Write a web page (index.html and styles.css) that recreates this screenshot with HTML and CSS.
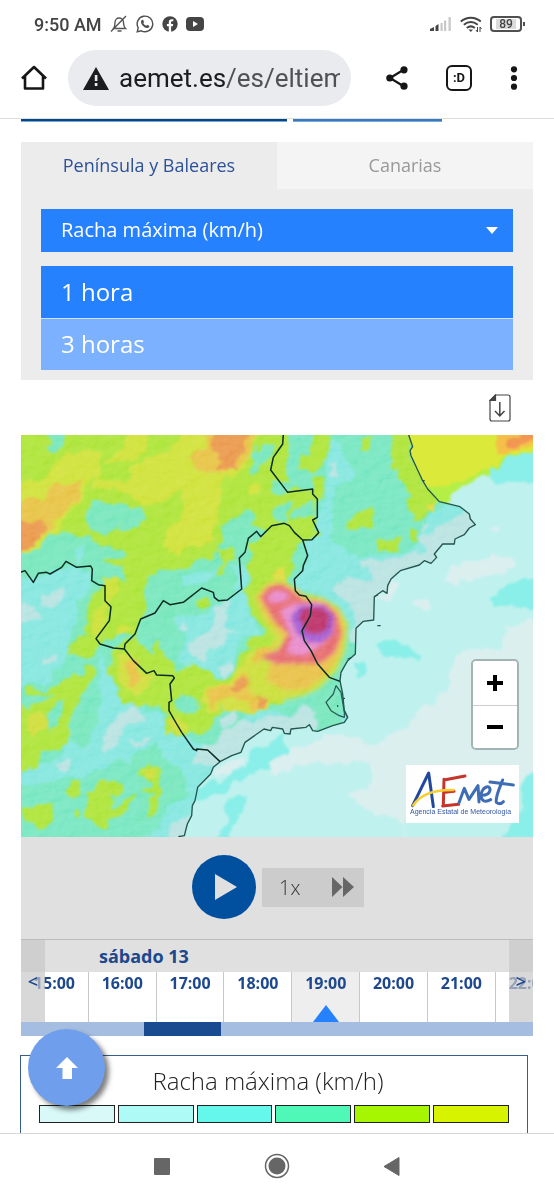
FILE: index.html
```html
<!DOCTYPE html>
<html lang="es">
<head>
<meta charset="utf-8">
<meta name="viewport" content="width=device-width, initial-scale=1">
<title>Racha máxima - AEMET</title>
<link rel="stylesheet" href="styles.css">
</head>
<body>
<header class="status">
  <span class="clock">9:50 AM</span>
  <svg class="st-icon" width="18" height="18" viewBox="0 0 18 18" fill="none" stroke="#555" stroke-width="1.4"><path d="M3.5 13.5c1.300-1.500 1.500-3 1.500-6C5 4.500 7 3 9 3s4.500 1.500 4.500 4.500c0 3 .3 4.500 2 6zM1 16.500 16 1M7.500 16h4"/></svg>
  <svg class="st-icon" width="18" height="18" viewBox="0 0 18 18"><path d="M1.200 16.800l1-4A7.800 7.800 0 1 1 5.300 15.800z" fill="none" stroke="#505050" stroke-width="1.400"/><path d="M5.700 5l1.400-.3 1 2.200-.8 1c.7 1.400 1.600 2.200 3 2.900l1-1 2.100 1.100c0 1.600-1.400 2.300-2.600 2.100C7.700 12.400 5.300 9.700 5 7.300c-.1-1 .2-1.700.7-2.300z" fill="#505050"/></svg>
  <svg class="st-icon" width="16" height="16" viewBox="0 0 16 16"><circle cx="8" cy="8" r="7.700" fill="#454545"/><path d="M6.800 16v-5.800H4.900V8h1.900V6.200c0-2 1.100-3 2.900-3l1.600.1v2h-1c-.9 0-1.200.5-1.200 1.200V8h2.100l-.4 2.200H9.100V16z" fill="#fff"/></svg>
  <svg class="st-icon" width="18" height="14" viewBox="0 0 18 14"><rect width="18" height="14" rx="4" fill="#454545"/><path d="M7 4l5 3-5 3z" fill="#fff"/></svg>
  <span class="grow"></span>
  <svg width="22" height="16" viewBox="0 0 22 16"><path d="M0 15v-2l4-2v4zM5.500 15v-5L8.500 8v7z" fill="#444"/><path d="M10.500 15V7h2.200v8zM14 15V4.500h2.200V15zM18.500 15V1h2.300v14z" fill="#c8c8c8"/></svg>
  <svg width="22" height="17" viewBox="0 0 22 17" fill="none" stroke="#444" stroke-width="2"><path d="M.8 5.500c6-5 14-5 20 0M3.800 8.800c4.500-3.500 9.500-3.500 14 0M6.800 12c2.500-2 5.500-2 8 0"/><path d="M8.500 13.500l2.300 2.500 2.200-2.500z" fill="#444" stroke="none"/><path d="M17.500 11v5m0 0l-1.500-2M20 16v-5m0 0l1.500 2" stroke-width="1"/></svg>
  <span class="battery"><span>89</span></span>
</header>
<div class="toolbar">
  <button class="bare" aria-label="Inicio"><svg width="28" height="28" viewBox="0 0 28 28" fill="none" stroke="#161616" stroke-width="2.600" stroke-linejoin="round"><path d="M5 12v12.500h18V12M2 14.500 14 3l12 11.500"/></svg></button>
  <div class="address">
    <svg class="warn" width="26" height="24" viewBox="0 0 26 24"><path d="M13 1 26 24H0z" fill="#1b1c1f"/><path d="M11.800 9h2.600v6h-2.600zM11.800 17h2.600v3h-2.600z" fill="#eaebef"/></svg>
    <span class="url">aemet.es<span class="path">/es/eltiem</span></span>
  </div>
  <div class="actions">
    <button class="bare" aria-label="Compartir"><svg width="22" height="24" viewBox="0 0 22 24"><path d="M18 3.500 4 12l14 8.500" fill="none" stroke="#161616" stroke-width="2.200"/><g fill="#161616"><circle cx="18" cy="3.800" r="3.600"/><circle cx="3.800" cy="12" r="3.600"/><circle cx="18" cy="20.200" r="3.600"/></g></svg></button>
    <button class="bare tabs-count" aria-label="Pestañas">:D</button>
    <button class="bare" aria-label="Menú"><svg width="8" height="24" viewBox="0 0 8 24" fill="#161616"><circle cx="4" cy="3.300" r="3.100"/><circle cx="4" cy="12" r="3.100"/><circle cx="4" cy="20.700" r="3.100"/></svg></button>
  </div>
</div>
<main class="content">
  <div class="rules"><span class="rule dark"></span><span class="rule"></span></div>
  <section class="filters">
    <nav class="regions">
      <a href="#peninsula" class="region active">Península y Baleares</a>
      <a href="#canarias" class="region">Canarias</a>
    </nav>
    <div class="fields">
      <div class="picker">
        <select aria-label="Variable"><option>Racha máxima (km/h)</option></select>
        <svg class="caret" width="12" height="7" viewBox="0 0 12 7"><path d="M0 0h12L6 7z" fill="#fff"/></svg>
      </div>
      <div class="periods">
        <button class="period on">1 hora</button>
        <button class="period">3 horas</button>
      </div>
    </div>
  </section>
  <div class="download">
    <button class="bare" aria-label="Descargar"><svg width="22" height="28" viewBox="0 0 22 28" fill="none" stroke="#444" stroke-width="1.200"><path d="M6.500 1H19q2 0 2 2v22q0 2-2 2H3q-2 0-2-2V6.500z"/><path d="M1 6.500 6.500 1v5.500z" fill="#444"/><path d="M10.800 8v14M6 17l4.800 5 4.700-5" stroke-width="1.500"/></svg></button>
  </div>
  <section class="map">
    <svg class="map-art" viewBox="3 3 1536 1206" preserveAspectRatio="xMidYMid slice" role="img" aria-label="Mapa de racha máxima">
      <defs>
        <filter id="soft" x="-10%" y="-10%" width="120%" height="120%"><feGaussianBlur stdDeviation="2"/></filter>
        <filter id="hot" x="-10%" y="-10%" width="120%" height="120%"><feGaussianBlur stdDeviation="7"/></filter>
        <filter id="cells" x="-5%" y="-5%" width="110%" height="110%" color-interpolation-filters="sRGB"><feTurbulence type="fractalNoise" baseFrequency="0.022" numOctaves="3" seed="4" result="n"/><feDisplacementMap in="SourceGraphic" in2="n" scale="42" xChannelSelector="R" yChannelSelector="G"/><feGaussianBlur stdDeviation="3"/></filter>
        <filter id="relief" x="0" y="0" width="100%" height="100%"><feTurbulence type="fractalNoise" baseFrequency="0.025 0.035" numOctaves="4" seed="9"/><feDiffuseLighting surfaceScale="9" lighting-color="#fff"><feDistantLight azimuth="225" elevation="50"/></feDiffuseLighting></filter>
      </defs>
      <g filter="url(#cells)">
      <rect x="-60" y="-60" width="1660" height="1340" fill="#71e5bd"/>
      <g>
        <path fill="#a9e334" d="M-60-60H800V600H-60z"/>
        <path fill="#cde035" d="M-40 145 60 142 100 88 150 55 240 55 245 100 225 130 190 190 140 240 110 300 40 350-40 360zM225 130 270 140 325 150 330 105 400 60 450 50 490-40H735L690 80 640 122 605 150 595 230 575 330 510 340 470 370 430 340 440 290 480 250 500 165 420 205 360 210 325 180 230 160zM250 82 300 50 325-20 385-20 370 60 340 82zM685 140H715V185H690z"/>
        <path fill="#e6c040" d="M-40 215 70 195 75 168 190 135 185 180 130 240 70 300 40 335-40 355zM545-40 560 40 510 75 525 100 570 122 620 120 665 90 700 50 720-40z"/>
        <path fill="#e99346" d="M-40 268 70 255 75 280 45 330-40 350zM585-40 575 40 600 90V108H650L655 70 685 25 695-40z"/>
        <path fill="#71e5b8" d="M85-30H140L130 40 108 55 85 50zM205 205 285 200 300 215 370 220 382 260 350 275 285 280 250 305 205 275zM-40 365 60 340 80 300 120 305 160 300 220 310 230 340 310 348 322 365 255 380 300 400 320 440 280 430 240 455 210 500 200 560 180 610H-40zM380 440 410 410 500 405 510 385 560 375 590 350 610 310 605 280 650 240 670 225 700 230 690 280 745 290 690 330 700 360 680 400 690 440 680 500 710 560 750 610H350L370 540zM690 80 700 60 740 35 768 40 750 80 715 95 715 112 690 115zM755 145H800V185H765zM755 245 770 225 800 205V260H770z"/>
        <path fill="#a9e334" d="M590 342 635 345 640 370 620 390 600 435 585 430 608 385zM520 500 570 490 575 515 545 520z"/>
        <path fill="#7ee5dd" d="M-40 440 100 412 150 400 210 410 215 455 180 500 150 610H-40zM485 430 540 410 600 415 560 450 490 458zM640 390 682 390 678 470 690 540 720 600H470L460 555 540 540 620 500 650 480zM150 350 190 340 200 370 170 385z"/>
        <path fill="#b3e1df" d="M70 490 130 458 140 472 95 520 65 510zM590 525 640 500 615 560 655 610H570L575 550zM-30 505 45 510 65 560-30 570zM480 570 505 575 495 600 475 590z"/>
        <path fill="#c9df32" d="M235 440 290 428 300 470 270 500 255 570 240 610H205L220 540 255 500zM295 572 335 575 320 600 290 600z"/>
      </g>
      <g transform="translate(768 0)">
        <path fill="#a9e334" d="M0-40H40L32 90 0 120zM75 85 100 60 120-40H165L150 80 110 122 85 110zM0 190 35 175 110 160 120 122 142 120 140 190 122 200 124 300 100 315 50 350 50 430 0 470zM210 265 280 222 285 285 215 285zM300 320 370 310 378 350 310 352zM345 50 370-40H410V38L405 65 440 140 490 203 440 255 405 270 405 200 390 150 360 125 370 95 345 100zM410 280H432L425 330H405zM253 10H287L280 50 255 45z"/>
        <path fill="#71e5b8" d="M0 210 40 200V250L0 258zM50 235 110 195 120 250 60 252zM75 22 95 25 90 45 75 45z"/>
        <path fill="#7ee5dd" d="M155 30 190 20 220 90 232 140 180 160 165 260 160 300 200 340 240 360 300 365 400 360 430 330 440 280 480 225 552 218 630 272 430 415 335 460 220 610 190 590 200 520 100 480 60 480 55 435 80 410 95 365 85 325 130 300 128 255 142 200 150 120z"/>
        <path fill="#b5e1df" d="M245 375 310 380 370 370 440 355 430 315 500 268 570 232 640 272 560 345 480 410 430 425 365 455 343 500 315 510V578L272 585 245 625H212L240 530 190 490 165 470 180 445 285 430 290 410 250 405zM160 85H180V125H162zM440 265 460 270 440 290z"/>
        <path fill="#e0d83a" d="M455 210 480 200 480 225 455 225zM0 400 25 395 30 440 0 450z"/>
      </g>
      <g transform="translate(0 600)">
        <path fill="#7ee5dd" d="M-40 0H150V60L90 140-40 180zM240 60 270 110 290 190 380 225 440 235 470 290 610 380 560 480 550 560 510 660H300L420 580 440 400 300 380 200 420-40 470V430L120 370 160 280 240 220zM500 0H660L640 120 590 130 470 80zM590 390 680 240H1000V320L700 350z"/>
        <path fill="#71e5b8" d="M160 250 240 220 250 260 210 300 200 345 160 330zM340 360 400 330 460 390 520 480 440 520 430 560H360zM470 175 540 200 545 235 460 230zM890 170 960 100V300H900z"/>
        <path fill="#a9e334" d="M-40 215 55 210 100 182 20 185V170L80 170 150 130 190 125 200 85 225 90 225 140 180 190 160 250 150 330 120 345 60 350 60 400-40 420zM145 70 150 35 190 0H290L240 20 240 45 200 70zM320 20 345 0 370 40 400 60 400 20 440 60 460 90 480 120 520 85 560 100 580 130 630 130 655 100 680 40 690 0H800V205L700 225 640 220 610 225 575 245V290L500 300 440 300 430 262 455 235 380 205 360 220 310 205 290 180 270 110 280 60zM365 400 420 395 430 420 412 470 420 510 400 545H385L395 480 350 472 395 455 400 440 365 425zM195 545 215 480 240 440 305 440 300 470 275 480 270 522 340 485 345 500 310 540 270 560 255 590zM130 470 172 435 190 482 150 480zM5 515 98 508 105 550 60 582 10 550zM160 525 175 535 170 555 160 545z"/>
        <path fill="#71e5bd" d="M100 210 132 195 112 262 90 300 80 260zM475 175 540 200 545 228 465 232z"/>
        <path fill="#cddc37" d="M285 70 330 60 370 110 400 120 395 170 350 180 300 150zM35 225 75 235 80 280 45 310 30 290zM555 170 640 130 690 60 800 0V150L755 180 745 235 690 240 600 225 560 235 545 200zM440 260 480 245 500 290 450 300zM370 405 410 400 405 430 390 430z"/>
        <path fill="#e7bf40" d="M318 88 355 78 362 150 325 158zM560 180 620 150 690 115 700 60 770 20 800 20V110L745 160 740 228 690 235 680 195 600 200 570 222z"/>
        <path fill="#e79347" d="M620 155 700 122 712 145 640 172zM705 170 738 190 730 228H708zM765 50 800 30V95L770 90z"/>
        <path fill="#b5e1df" d="M250 315 290 240 350 220 385 240 380 265 330 262 310 285 285 345 255 348zM500 30 560 0H620L600 40 560 65 550 85 510 50zM595 105 635 80 645 105 610 130zM530 352 590 325 620 280 680 260 800 245 850 210 900 230V290L675 340 600 400 525 385zM450 560 530 535 520 650H450zM105 395 150 375 150 400 125 415zM70 70 100 60 100 80 80 95zM335 320H390V330H335zM600 250 635 230 650 260 610 280z"/>
      </g>
      </g>
      <g filter="url(#hot)">
        <path fill="#c8dd35" d="M700 490 735 450 768 430 825 460 850 480 905 490 955 520 985 570 975 650 950 710 895 765 850 785 768 805 690 780 680 700 745 670 770 620 730 560z"/>
        <path fill="#e7bd42" d="M708 490 740 452 780 444 830 467 860 492 915 500 960 532 975 590 960 660 920 720 860 765 800 770 740 740 750 690 790 620 730 540z"/>
        <path fill="#e6666a" d="M720 490 745 458 785 449 820 472 850 497 920 508 953 545 965 600 945 655 900 690 770 690 720 670 775 645 805 600 765 565z"/>
        <path fill="#e685c8" d="M742 490 765 470 803 477 803 496 770 506 750 503zM782 528 820 510 900 507 938 540 928 610 905 632 850 665 800 655 815 610 798 570z"/>
        <path fill="#9b55d0" d="M812 545 840 515 910 513 942 545 937 600 900 627 855 622 825 590z"/>
        <path fill="#b82d63" d="M835 550 850 522 905 520 930 545 922 585 895 602 858 596z"/>
      </g>
      <g class="relief"><rect width="1545" height="1215" filter="url(#relief)"/></g>
      <clipPath id="sea"><path d="M1165-10 1178 38 1170 50 1173 65 1208 140 1223 165 1258 203 1320 218 1348 240 1351 255 1366 272 1348 282 1333 302 1305 315 1303 330 1268 330 1243 360 1250 370 1233 388 1213 380 1198 393 1141 410 1113 435 1103 455 1101 478 1088 470 1063 488 1061 558 1030 562 1008 583 1006 660 983 680 963 715 960 740 968 780 973 830 983 850 973 865 938 875 893 892 878 890 868 872 858 880 813 885 810 900 793 898 788 885 757 880 752 890 732 885 675 925 663 955 635 965 600 983 580 1000 572 1020 533 1060 525 1100 517 1115 515 1145 502 1170 493 1225H1560V-20z"/></clipPath>
      <g clip-path="url(#sea)"><g filter="url(#cells)">
      <rect x="-60" y="-60" width="1660" height="1340" fill="#bff1ee"/>
      <g transform="translate(768 0)">
        <path fill="#b4ef45" d="M370-60H830V50L640 125 575 145 535 170 520 230 450 230 400 140z"/>
        <path fill="#dbe93b" d="M370-60H830V30L680 75 620 110 555 140 480 155 380 160z"/>
        <path fill="#f6c048" d="M655-60H830V20L720 50 690 68 668 65 665 35z"/><path fill="#f29752" d="M705 8 830-20V5L755 25 720 42 698 35z"/>
        <path fill="#8aefe8" d="M640 100 700 75 830 20V152L700 142 650 150zM645 490 700 450 830 425V515L650 522z"/>
        <path fill="#dbefef" d="M515 440 530 395 635 378 650 360 730 380 690 415 600 430 540 455zM295 495 325 470 340 440 372 445 345 500zM400 500 460 500 465 520 410 520zM645 285 675 285V300H645zM830 530 700 575 680 620H830z"/>
      </g>
      <g transform="translate(768 600)">
        <path fill="#dbefef" d="M830-10H690L680 30 600 50 540 55 520 110 510 170 440 230 370 290 300 330 250 320 200 295 150 305 60 340-10 375V420L60 395 190 385 285 385V460L215 480 260 520 350 550 390 570V660H830z"/>
        <path fill="#bff1ee" d="M830 420 710 480 700 550 390 545 400 660H830zM615 0H680L670 40 620 45z"/>
        <path fill="#8aefe8" d="M740 440 830 370V660H665L700 570 735 535zM300 30 350 20 440 60 430 75 330 65zM240 80H265L260 130 240 140zM0 310 35 300 10 350-20 380V330z"/>
      </g>
      <g transform="translate(0 600)">
        <path fill="#8aefe8" d="M480 480 600 440 640 410 690 390 690 355 800 300V365L700 425 640 440 600 475 480 520zM620 495 680 485 640 560 620 650H575L620 550z"/>
        <path fill="#dbefef" d="M600 395 660 370 685 385 630 415 580 425zM745 385 790 365V410H750z"/>
      </g>
      </g></g>
      <g fill="none" stroke="#24564e" stroke-width="4" stroke-linejoin="round" filter="url(#soft)" opacity=".6"><path d="M983 850 973 830"/></g>
      <g fill="none" stroke="#24564e" stroke-width="4" stroke-linejoin="round">
        <path d="M1165 0 1178 38 1170 50 1173 65 1208 140 1223 165 1258 203 1320 218 1348 240 1351 255 1366 272 1348 282 1333 302 1305 315 1303 330 1268 330 1243 360 1250 370 1233 388 1213 380 1198 393 1141 410 1113 435 1103 455 1101 478 1088 470 1063 488 1061 558 1030 562 1008 583 1006 660 983 680 963 715 960 740 968 780 973 830 983 850 973 865 938 875 893 892 878 890 868 872 858 880 813 885 810 900 793 898 788 885 757 880 752 890 732 885 675 925 663 955 635 965 600 983 580 1000 572 1020 533 1060 525 1100 517 1115 515 1145 502 1170 493 1205 475 1208"/>
        <path d="M948 755 940 780 918 805 933 830 958 845 973 850 973 835 963 775zM1208 140h6M1062 488l12-5M1072 575h10M983 675l10-4M965 793h10M953 813v6" stroke-width="3.500"/>
      </g>
      <g fill="none" stroke="#0b2b23" stroke-width="4.500" stroke-linejoin="round">
        <path d="M0 415 15 410 40 445 55 418 80 415 90 420 125 400 138 382 170 400 212 396 217 405 215 440 235 452 255 455V500L273 518 268 560 228 614 240 630 280 642 313 645 315 630 345 600 362 555 405 537 430 500 450 512 490 505 545 462 580 475 583 490 595 500 622 498 665 465 658 372 675 355 685 313 710 292 722 308 755 275 793 268 808 275 823 295 848 318 876 317 896 296 878 258 892 250V195L878 180V165L803 175 752 108 760 70 788 30 790 0"/>
        <path d="M848 318 863 365 850 395 848 410 823 435 826 470 838 483 858 487 875 512 871 545 846 590 853 620 873 650 893 690 928 730 960 742M313 645 340 680 380 718 402 710 410 723 458 725 463 732 450 750 455 800 447 805V830L470 870 485 895 520 945 530 950V945L563 948 600 983"/>
      </g>
    </svg>
    <div class="zoom">
      <button aria-label="Acercar"><svg width="16" height="16" viewBox="0 0 16 16"><path d="M0 8h16M8 0v16" stroke="#000" stroke-width="4"/></svg></button>
      <button aria-label="Alejar"><svg width="16" height="16" viewBox="0 0 16 16"><path d="M0 8h16" stroke="#000" stroke-width="4"/></svg></button>
    </div>
    <div class="brand">
      <svg width="106" height="40" viewBox="0 0 318 120" fill="none" stroke-linecap="round" stroke-linejoin="round">
        <path d="M8 113 56 15 70 116" stroke="#22489c" stroke-width="9"/>
        <path d="M102 34 100 110M102 36 165 24M105 73 132 70M98 114 146 109" stroke="#c5352b" stroke-width="9"/>
        <path d="M10 112C34 74 78 65 130 66" stroke="#f7cf32" stroke-width="8"/>
        <path d="M147 104 163 61 177 94 204 53 207 102M216 82C245 82 246 53 229 57 206 66 206 114 242 95M278 36C266 66 256 86 259 103Q270 112 280 101M240 42 310 51" stroke="#3e6cb5" stroke-width="9"/>
      </svg>
      <span class="brand-name">Agencia Estatal de Meteorología</span>
    </div>
  </section>
  <section class="player">
    <button class="play" aria-label="Reproducir"><svg width="22" height="26" viewBox="0 0 22 26"><path d="M0 0 22 13 0 26z" fill="#e0e0e0"/></svg></button>
    <button class="speed"><span>1x</span><svg width="22" height="20" viewBox="0 0 22 20"><path d="M0 0 10.500 10 0 20zM11 0 22 10 11 20z" fill="#666"/></svg></button>
  </section>
  <section class="timeline">
    <div class="day">sábado 13</div>
    <div class="hours">
      <span class="hour">15:00</span><span class="hour">16:00</span><span class="hour">17:00</span><span class="hour">18:00</span>
      <span class="hour now">19:00<svg class="marker" width="26" height="17" viewBox="0 0 26 17"><path d="M13 0 26 17H0z" fill="#2681ff"/></svg></span>
      <span class="hour">20:00</span><span class="hour">21:00</span><span class="hour">22:00</span>
    </div>
    <button class="step prev" aria-label="Anterior">&lt;</button>
    <button class="step next" aria-label="Siguiente">&gt;</button>
    <div class="track"><span class="thumb"></span></div>
  </section>
  <section class="legend">
    <h2>Racha máxima (km/h)</h2>
    <div class="scale"><span class="c1"></span><span class="c2"></span><span class="c3"></span><span class="c4"></span><span class="c5"></span><span class="c6"></span></div>
  </section>
  <button class="to-top" aria-label="Subir"><svg width="22" height="22" viewBox="0 0 22 22"><path d="M11 0 22 11H16V22H6.500V11H0z" fill="#fff"/></svg></button>
</main>
<footer class="system">
  <button class="bare" aria-label="Recientes"><svg width="18" height="26" viewBox="0 0 18 26"><rect x="1" y="5" width="16" height="17" rx="1" fill="#666"/></svg></button>
  <button class="bare" aria-label="Inicio del sistema"><svg width="26" height="26" viewBox="0 0 26 26"><circle cx="13" cy="13" r="11.500" fill="none" stroke="#666" stroke-width="1.500"/><circle cx="13" cy="13" r="8.500" fill="#666"/></svg></button>
  <button class="bare" aria-label="Atrás"><svg width="18" height="26" viewBox="0 0 18 26"><path d="M1 13.500 16 4.500V22.500z" fill="#666" stroke="#666" stroke-linejoin="round"/></svg></button>
</footer>
</body>
</html>
```
FILE: styles.css
```css
* { box-sizing: border-box; }
body {
  margin: 0;
  min-height: 100vh;
  display: flex;
  flex-direction: column;
  background: #fff;
  font-family: "Open Sans", sans-serif;
  color: #1d488e;
}
button, select { font: inherit; color: inherit; border: 0; margin: 0; padding: 0; border-radius: 0; }
svg { display: block; }
.bare { background: none; display: flex; align-items: center; justify-content: center; }
.grow { flex: 1; }

.status {
  height: 48px;
  padding: 0 30px 0 34px;
  display: flex;
  align-items: center;
  gap: 8px;
  color: #444;
  font-family: Roboto, sans-serif;
}
.clock { font-size: 18px; font-weight: 500; }
.battery {
  position: relative;
  width: 32px;
  height: 16px;
  margin-right: 2px;
  padding: 1px 4px;
  border: 2px solid #505050;
  border-radius: 4px;
  font-size: 12px;
  line-height: 10px;
  font-weight: 500;
  text-align: center;
}
.battery span { display: block; background: #dcdcdc; }
.battery::after {
  content: "";
  position: absolute;
  right: -5px;
  top: 4px;
  width: 2px;
  height: 4px;
  background: #505050;
}
.toolbar {
  height: 71px;
  padding: 2px 36px 13px 20px;
  display: flex;
  align-items: center;
  gap: 20px;
  border-bottom: 1px solid #dedede;
}
.address {
  flex: 1;
  min-width: 0;
  height: 56px;
  padding: 0 11px 0 15px;
  border-radius: 28px;
  background: #eaebef;
  display: flex;
  align-items: center;
  gap: 10px;
}
.warn { flex: none; }
.url {
  flex: 1;
  overflow: hidden;
  white-space: nowrap;
  font: 26px/34px Roboto, sans-serif;
  color: #1c1c1f;
}
.path { color: #505155; }
.actions { display: flex; align-items: center; gap: 38px; margin-left: 15px; }
.tabs-count {
  width: 26px;
  height: 26px;
  border: 2px solid #161616;
  border-radius: 6px;
  font: 700 13px/20px Roboto, sans-serif;
  color: #161616;
}

.content { flex: 1; position: relative; padding: 0 21px; display: flex; flex-direction: column; }
.rules { display: flex; gap: 6px; height: 23px; }
.rule { width: 29%; height: 3px; background: #3b79bd; border-bottom: 1px solid #73a7dc; }
.dark { width: 52%; background: #064781; }
.filters { background: #ececec; }
.regions { display: flex; height: 47px; font-size: 18px; line-height: 46px; text-align: center; }
.region { flex: 1; color: #999; background: #f4f4f4; text-decoration: none; }
.region.active { color: #2d5199; background: none; }
.fields { padding: 20px 20px 10px; display: flex; flex-direction: column; gap: 14px; color: #fff; }
.picker { position: relative; }
.picker select {
  width: 100%;
  height: 43px;
  padding: 0 20px 2px;
  appearance: none;
  background: #2681ff;
  font-size: 20px;
}
.caret { position: absolute; right: 15px; top: 18px; pointer-events: none; }
.periods { display: flex; flex-direction: column; gap: 1px; background: #cfe2fb; }
.period { height: 51px; padding: 0 0 2px 20px; background: #7cb1ff; font-size: 24px; text-align: left; }
.on { height: 52px; background: #2681ff; }
.download { height: 55px; padding: 0 22px; display: flex; justify-content: flex-end; align-items: center; }

.map { position: relative; overflow: hidden; }
.map-art { width: 100%; }
.relief { mix-blend-mode: soft-light; opacity: .35; }
.zoom {
  position: absolute;
  right: 14px;
  bottom: 87px;
  width: 48px;
  border: 2px solid #a3b4b4;
  border-radius: 5px;
  overflow: hidden;
}
.zoom button {
  width: 100%;
  height: 44px;
  background: #fff;
  display: flex;
  align-items: center;
  justify-content: center;
}
.zoom button + button { height: 43px; border-top: 1px solid #ccc; }
.brand {
  position: absolute;
  right: 14px;
  bottom: 14px;
  width: 113px;
  height: 58px;
  padding: 3px 4px;
  background: #fff;
}
.brand-name { display: block; font: 7px/8px "Liberation Sans", sans-serif; color: #3157a0; white-space: nowrap; }

.player {
  height: 103px;
  display: flex;
  align-items: center;
  justify-content: center;
  gap: 6px;
  padding: 0 0 2px 2px;
  background: #e0e0e0;
  border-bottom: 1px solid #bbb;
}
.play {
  width: 64px;
  height: 64px;
  padding-left: 4px;
  border-radius: 50%;
  background: #00509f;
  display: flex;
  align-items: center;
  justify-content: center;
}
.speed {
  width: 102px;
  height: 39px;
  padding: 0 10px 0 17px;
  background: #ccc;
  color: #333;
  font-size: 20px;
  font-weight: 300;
  display: flex;
  align-items: center;
  justify-content: space-between;
}
.timeline { position: relative; overflow: hidden; font-weight: 700; }
.day { height: 32px; padding-left: 78px; background: #e0e0e0; font-size: 18px; line-height: 33px; }
.hours { display: flex; height: 50px; }
.hour {
  position: relative;
  flex: 0 0 13.25%;
  border-right: 1px solid #c8c8c8;
  font-size: 16px;
  line-height: 23px;
  text-align: center;
}
.now { background: #eee; }
.marker { position: absolute; left: 50%; bottom: 0; margin-left: -13px; }
.step {
  position: absolute;
  top: 0;
  width: 24px;
  height: 82px;
  background: rgba(200, 200, 200, .7);
  font-size: 18px;
  font-weight: 600;
}
.prev { left: 0; }
.next { right: 0; }
.track { height: 14px; background: #a5bde1; }
.thumb { display: block; width: 15%; height: 100%; margin-left: 24%; background: #1a4a90; }

.legend {
  flex: 1;
  margin: 19px 5px 0 -1px;
  padding: 9px 18px 10px;
  border: 1px solid #375e8c;
  border-bottom: 0;
}
.legend h2 { margin: 0 0 8px; padding-right: 12px; font-size: 24px; line-height: 32px; font-weight: 300; color: #222; text-align: center; }
.scale { display: flex; gap: 3px; }
.scale span { flex: 1; height: 18px; border: 1px solid #222; }
.c1 { background: #d9f8f8; }
.c2 { background: #aefaf7; }
.c3 { background: #66f7ec; }
.c4 { background: #4ff8b7; }
.c5 { background: #a5f600; }
.c6 { background: #d8f300; }
.to-top {
  position: absolute;
  left: 28px;
  bottom: 27px;
  width: 77px;
  height: 77px;
  border-radius: 50%;
  background: #6f9fec;
  box-shadow: 4px 4px 5px rgba(0, 0, 0, .5);
  display: flex;
  align-items: center;
  justify-content: center;
}
.system {
  height: 67px;
  padding-bottom: 2px;
  border-top: 1px solid #d5dad8;
  display: flex;
  align-items: center;
  justify-content: center;
  gap: 93px;
}
```
